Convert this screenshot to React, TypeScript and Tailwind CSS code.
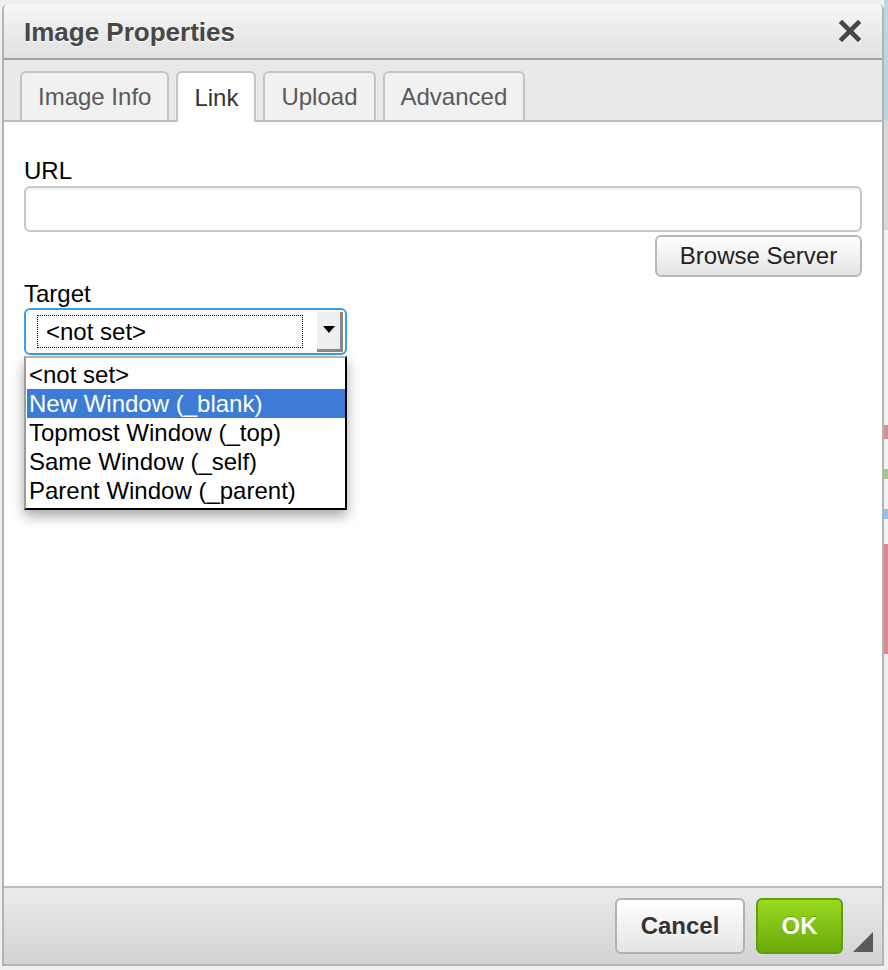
import React from "react";

const font = { fontFamily: '"Liberation Sans", Arial, Helvetica, sans-serif' };

function CloseIcon() {
  return (
    <svg width="24" height="22" viewBox="0 0 24 22" className="[filter:drop-shadow(0_1px_0_#fff)]">
      <path d="M4 3 L20 19 M20 3 L4 19" stroke="#474747" strokeWidth="4.6" strokeLinecap="square" />
    </svg>
  );
}

function Tab({ label, active }: { label: string; active?: boolean }) {
  return (
    <div
      className={
        active
          ? "h-[51px] -mb-[2px] px-[16px] flex items-center pt-[1px] rounded-t-[6px] border-2 border-b-0 border-[#c4c4c4] bg-white text-[24px] text-[#333]"
          : "h-[49px] px-[16px] flex items-center rounded-t-[6px] border-2 border-b-0 border-[#c4c4c4] bg-[#f1f1f1] text-[24px] text-[#595959]"
      }
    >
      {label}
    </div>
  );
}

export default function App() {
  const options = [
    "<not set>",
    "New Window (_blank)",
    "Topmost Window (_top)",
    "Same Window (_self)",
    "Parent Window (_parent)",
  ];
  return (
    <div className="w-[888px] h-[970px] bg-[#eef0f1] flex" style={font}>
      <div className="w-[2px]" />
      <div className="mt-[4px] w-[882px] h-[962px] flex flex-col rounded-t-[6px] border-x-2 border-b-2 border-[#b4b4b4] bg-white overflow-visible">
        {/* Title bar */}
        <div className="h-[56px] flex-none flex items-center justify-between pl-[20px] pr-[20px] rounded-t-[5px] bg-linear-to-b from-[#f7f7f7] to-[#e1e1e1] border-b-2 border-[#a3a3a3]">
          <div className="text-[26px] font-bold text-[#474747] [text-shadow:0_1px_0_#fff] pt-[2px]">
            Image Properties
          </div>
          <CloseIcon />
        </div>
        {/* Tabs */}
        <div className="h-[62px] flex-none bg-[#e9e9e9] border-b-2 border-[#bcbcbc] flex items-end gap-[7px] pl-[16px]">
          <Tab label="Image Info" />
          <Tab label="Link" active />
          <Tab label="Upload" />
          <Tab label="Advanced" />
        </div>
        {/* Content */}
        <div className="flex-1 bg-white pl-[20px] pr-[20px] pt-[35px] flex flex-col">
          <div className="text-[24px] leading-[28px] text-black">URL</div>
          <div className="mt-[1px] h-[46px] rounded-[6px] border-2 border-[#c8c8c8] bg-white shadow-[inset_0_2px_2px_rgba(0,0,0,0.06)]" />
          <div className="mt-[3px] flex justify-end">
            <div className="w-[207px] h-[42px] flex items-center justify-center rounded-[6px] border-2 border-[#b8b8b8] bg-linear-to-b from-[#ffffff] to-[#e4e4e4] text-[24px] text-[#222]">
              Browse Server
            </div>
          </div>
          <div className="mt-[3px] text-[24px] leading-[28px] text-black">Target</div>
          <div className="relative w-[323px]">
            <div className="h-[47px] rounded-[6px] border-2 border-[#3b9df0] bg-white flex items-center pl-[11px] pr-[2px]">
              <div className="w-[266px] h-[33px] border border-dotted border-black flex items-center pl-[8px] text-[24px] text-black">
                {"<not set>"}
              </div>
              <div className="ml-auto w-[26px] h-[40px] bg-[#efefef] border-r-[3px] border-b-[3px] border-[#8a8a8a] flex items-center justify-center">
                <svg width="12" height="8" viewBox="0 0 12 8">
                  <path d="M0 0 H12 L6 7 Z" fill="#000" />
                </svg>
              </div>
            </div>
            {/* Dropdown list */}
            <div className="absolute left-0 top-[48px] w-[323px] bg-white border-t-2 border-l-2 border-r-2 border-b-2 border-t-[#b4b4b4] border-l-[#9c9c9c] border-r-black border-b-black shadow-[0_6px_12px_rgba(0,0,0,0.35)] pt-[2px] pb-[3px] pl-[1px]">
              {options.map((o, i) => (
                <div
                  key={o}
                  className={
                    i === 1
                      ? "h-[29px] flex items-center pl-[2px] text-[24px] bg-[#3c7bd6] text-white"
                      : "h-[29px] flex items-center pl-[2px] text-[24px] text-black"
                  }
                >
                  {o}
                </div>
              ))}
            </div>
          </div>
        </div>
        {/* Footer */}
        <div className="h-[78px] flex-none border-t-2 border-[#bdbdbd] bg-linear-to-b from-[#ebebeb] to-[#d3d3d3] flex items-center justify-end pr-[9px]">
          <div className="w-[130px] h-[56px] flex items-center justify-center rounded-[6px] border-2 border-[#b2b2b2] bg-linear-to-b from-[#ffffff] to-[#e5e5e5] text-[24px] font-bold text-[#333] [text-shadow:0_1px_0_#fff]">
            Cancel
          </div>
          <div className="ml-[11px] w-[87px] h-[56px] flex items-center justify-center rounded-[6px] border-2 border-[#5e9f0d] bg-linear-to-b from-[#9bd91f] to-[#6aab0a] text-[24px] font-bold text-white [text-shadow:0_-1px_0_rgba(0,0,0,0.25)]">
            OK
          </div>
          <div className="ml-[10px] self-end mb-[12px] w-[20px] h-[20px]">
            <svg width="20" height="20" viewBox="0 0 20 20">
              <path d="M20 0 V20 H0 Z" fill="#5a5a5a" />
            </svg>
          </div>
        </div>
      </div>
      <div className="flex-1 flex flex-col">
        <div className="h-[120px] bg-[#b8d8e6]" />
        <div className="h-[110px] bg-[#d8d8d8]" />
        <div className="h-[195px] bg-[#f3f3f3]" />
        <div className="h-[14px] bg-[#d88e8e]" />
        <div className="h-[30px] bg-[#f3f3f3]" />
        <div className="h-[10px] bg-[#9dcb8e]" />
        <div className="h-[30px] bg-[#f3f3f3]" />
        <div className="h-[10px] bg-[#8ec6ea]" />
        <div className="h-[25px] bg-[#f3f3f3]" />
        <div className="h-[110px] bg-[#d98a8a]" />
        <div className="flex-1 bg-[#eeeeee]" />
      </div>
    </div>
  );
}
